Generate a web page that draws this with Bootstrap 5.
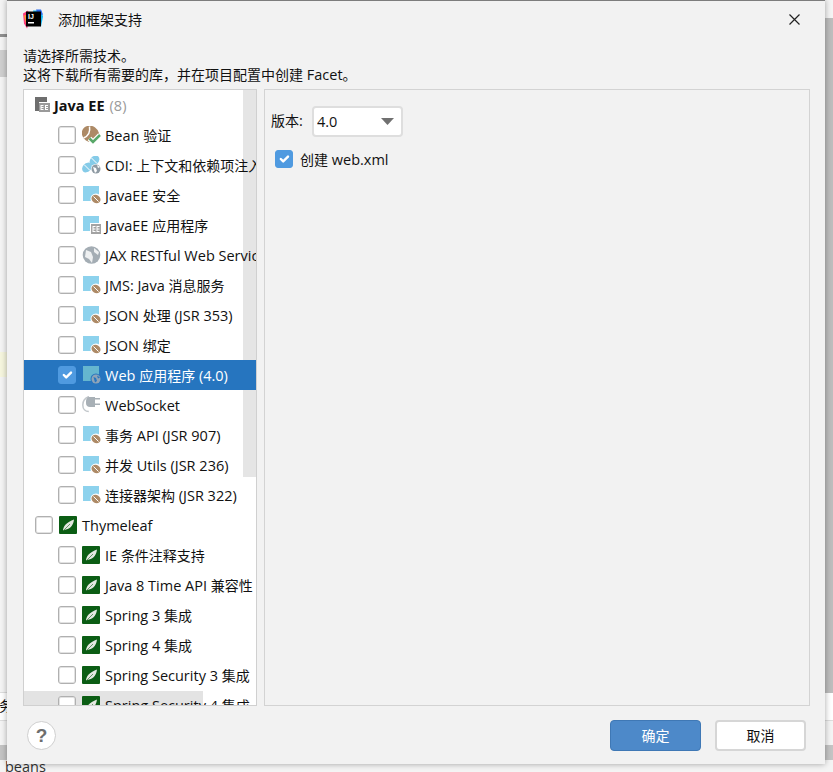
<!DOCTYPE html>
<html lang="zh-CN">
<head>
    <meta charset="UTF-8">
    <meta name="viewport" content="width=device-width, initial-scale=1.0">
    <title>添加框架支持</title>

    <!-- Bootstrap CSS -->
    <link href="https://cdn.jsdelivr.net/npm/bootstrap@5.3.0/dist/css/bootstrap.min.css" rel="stylesheet">

    <style>
        html, body { height: 100%; }
        body {
            position: relative;
            overflow: hidden;
            background: #f4f4f4;
            font-family: "Open Sans", "Noto Sans CJK SC", sans-serif;
            font-size: 14.5px;
            color: #111;
        }
        .cjk { font-size: 14px; }

        /* the IDE behind the dialog */
        .ide-piece { position: absolute; }
        .ide-rule { left: 0; width: 7px; top: 34px; height: 3px; background: #8f8f8f; }
        .ide-tab { left: 0; width: 7px; top: 50px; height: 27px; background: #cfcfcf; }
        .ide-hint { left: 0; width: 7px; top: 352px; height: 25px; background: #f6f6de; }
        .ide-foot { left: 0; right: 0; top: 692px; height: 29px; background: #fff; border-top: 1px solid #ddd; border-bottom: 1px solid #ddd; }
        .ide-shade { left: 0; right: 0; top: 745px; height: 15px; background: #c4c4c4; }
        .ide-side { right: 0; width: 8px; top: 18px; height: 675px; background: #bdbdbd; }
        .ide-glyph { left: -1px; top: 697px; line-height: 18px; font-size: 14px; }
        .ide-beans { left: 5px; top: 758px; line-height: 18px; color: #333; }

        /* dialog window */
        .dlg {
            position: absolute;
            left: 7px; top: 0;
            width: 818px; height: 764px;
            background: #f2f2f2;
            border-top: 1px solid #7d7d7d;
            box-shadow: 0 0 6px rgba(0, 0, 0, .35);
        }
        .dlg-title { height: 36px; padding: 0 16px; }
        .dlg-title-text { font-size: 14px; margin-left: 15px; }
        .dlg-close { margin-left: auto; margin-right: 9px; }
        .dlg-intro { padding-left: 16px; line-height: 19px; height: 52px; padding-top: 9px; }
        .dlg-body { padding-left: 16px; padding-right: 15px; height: 617px; gap: 7px; }

        .tree-box {
            position: relative;
            width: 234px;
            background: #fff;
            border: 1px solid #d0d0d0;
            overflow: hidden;
        }
        .tree-bar {
            position: absolute;
            right: 0; top: 0;
            width: 13px; height: 387px;
            background: rgba(0, 0, 0, .1);
        }
        .tree-hover {
            position: absolute;
            left: 0; bottom: 0;
            width: 179px; height: 14px;
            background: #e3e3e3;
        }
        .tree-list { position: relative; border-radius: 0; }
        .tree-row {
            display: flex;
            align-items: center;
            height: 30px;
            padding: 0;
            border: 0;
            background: transparent;
            color: #111;
            white-space: nowrap;
            font-size: 14.5px;
        }
        .list-group-item + .tree-row.active { margin-top: 0; border: 0; }
        .tree-row.active { background: #2675bf; color: #fff; }
        .lvl-0 { padding-left: 11px; }
        .lvl-1 { padding-left: 34px; }
        .tree-row svg { flex: none; width: 19px; height: 18px; margin-right: 4px; margin-left: 6px; }
        .tree-row.head svg { width: 16px; height: 16px; margin-left: 0; margin-right: 3px; }
        .row-text { padding-top: 2px; }
        .head-name { font-weight: 700; }
        .head-count { color: #9a9a9a; margin-left: 5px; }

        .ij-check.form-check-input {
            flex: none;
            width: 18px; height: 18px;
            margin: 0;
            border: 1px solid #b0b0b0;
            box-shadow: inset 0 0 0 1px #e2e2e2;
            border-radius: 3px;
            background-color: #fff;
        }
        .ij-check.form-check-input:checked {
            background-color: #4f9ae0;
            border-color: #4f9ae0;
            box-shadow: none;
        }

        .opt-box { flex: 1; border: 1px solid #d3d3d3; padding: 16px 6px; }
        .opt-label { width: 41px; padding-bottom: 2px; }
        .ij-select.form-select {
            width: 91px; height: 31px;
            padding: 0 0 0 3px;
            font-size: 14.5px;
            color: #111;
            border: 2px solid #dedede;
            border-radius: 4px;
            background-size: 13px 7px;
            background-position: right 7px center;
            background-image: url("data:image/svg+xml,%3csvg xmlns='http://www.w3.org/2000/svg' viewBox='0 0 13 7'%3e%3cpath fill='%23707070' d='M0 0h13L6.500 7z'/%3e%3c/svg%3e");
        }
        .web-xml { margin-top: 10px; padding-left: 4px; gap: 7px; }
        .web-xml label { padding-top: 2px; }

        .dlg-foot { height: 58px; padding-left: 20px; padding-right: 19px; padding-top: 14px; }
        .help-btn {
            width: 29px; height: 29px;
            margin-top: 1px;
            padding: 0;
            border-radius: 50%;
            background: #fff;
            border: 1px solid #cfcfcf;
            color: #6e6e6e;
            font-family: "Liberation Sans", sans-serif;
            font-weight: 700;
            font-size: 19px;
            line-height: 26px;
        }
        .ij-btn { height: 31px; width: 91px; padding: 0; font-size: 14px; border-radius: 4px; }
        .ij-ok.btn { background: #4d89c9; border: 1px solid #3f78b5; color: #fff; }
        .ij-cancel.btn { background: #fff; border: 2px solid #d6d6d6; color: #111; margin-left: 14px; }
    </style>
</head>
<body>

    <!-- icon set -->
    <svg width="0" height="0" class="position-absolute">
        <symbol id="i-jee" viewBox="0 0 16 16">
            <path fill="#6e6e6e" d="M0 0h12v5H4v9H0z"/>
            <rect x="4" y="6" width="11" height="9" fill="#9a9a9a"/>
            <path stroke="#fff" stroke-width="1" fill="none" d="M6 8.500h2.500M6 10.500h2.500M6 12.500h2.500M6 8v5M10.500 8.500H13M10.500 10.500H13M10.500 12.500H13M10.500 8v5"/>
        </symbol>
        <symbol id="i-bean" viewBox="0 0 19 18">
            <ellipse cx="8.500" cy="8" rx="9" ry="8" transform="rotate(35 8.500 8)" fill="#ad8a66"/>
            <path d="M1.500 12Q9 9 7.500 .5" stroke="#fff" stroke-width="1.500" fill="none"/>
            <path d="M7.500 12.500l3.500 3.500 7-7" stroke="#fff" stroke-width="5" fill="none"/>
            <path d="M7.500 12.500l3.500 3.500 7-7" stroke="#59a869" stroke-width="2.500" fill="none"/>
        </symbol>
        <symbol id="i-cdi" viewBox="0 0 19 18">
            <ellipse cx="12.500" cy="4.500" rx="5.500" ry="4.200" transform="rotate(-45 12.500 4.500)" fill="#85cbe8"/>
            <ellipse cx="5" cy="11.500" rx="5.500" ry="4.200" transform="rotate(-45 5 11.500)" fill="#85cbe8"/>
            <path d="M9.500 2l5.500 5.500M2 8.500L8 14.500" stroke="#fff" stroke-width="1"/>
            <circle cx="14" cy="13" r="5" fill="#fff"/>
            <circle cx="14" cy="13" r="4.500" fill="#8e9aa3"/>
            <path d="M11 11l3 1 1 3-2 2zM15 9l3 2-2 1z" fill="#fff"/>
        </symbol>
        <symbol id="i-sec" viewBox="0 0 19 18">
            <rect x="1" y="0" width="16" height="15" fill="#8dd2ed"/>
            <circle cx="14" cy="13" r="5.500" fill="#fff"/>
            <ellipse cx="14" cy="13" rx="4.700" ry="4" transform="rotate(35 14 13)" fill="#ad8a66"/>
            <path d="M11.500 10.500l5 5" stroke="#fff" stroke-width="1"/>
        </symbol>
        <symbol id="i-app" viewBox="0 0 19 18">
            <rect x="1" y="0" width="16" height="15" fill="#8dd2ed"/>
            <rect x="8" y="7" width="11" height="11" fill="#fff"/>
            <rect x="9" y="8" width="10" height="10" fill="#a3a3a3"/>
            <path stroke="#fff" stroke-width="1" fill="none" d="M11 10.500h2.500M11 13h2.500M11 15.500h2.500M15 10.500h2.500M15 13h2.500M15 15.500h2.500M11 10v6M15 10v6"/>
        </symbol>
        <symbol id="i-globe" viewBox="0 0 19 18">
            <circle cx="9.500" cy="9" r="8.800" fill="#a4adb4"/>
            <path d="M4 4l5 2 2 5-1 6-3-4-4-2zM12 2l5 4-1 3-4-3z" fill="#eef0f1"/>
        </symbol>
        <symbol id="i-web" viewBox="0 0 19 18">
            <rect x="1" y="0" width="16" height="15" fill="#65b6cf"/>
            <circle cx="14" cy="13" r="5.500" fill="#2675bf"/>
            <circle cx="14" cy="13" r="4.500" fill="#8ea4b8"/>
            <path d="M11.500 11l2.500 1 1 3-2 1.500zM15 9.500l3 2-2 1z" fill="#2675bf"/>
        </symbol>
        <symbol id="i-plug" viewBox="0 0 19 18">
            <path d="M7 .5C2.500 2 .8 5 .8 9s2.500 6.500 6 6.500" stroke="#c2c7cb" stroke-width="1.500" fill="none"/>
            <path d="M7 1h6v10H8C5.500 11 4 9.500 4 7V5C4 3 5.500 1 7 1z" fill="#a8b0b6"/>
            <path d="M13 2h5v1.500h-5zM13 7.500h5V9h-5z" fill="#a8b0b6"/>
        </symbol>
        <symbol id="i-leaf" viewBox="0 0 19 18">
            <rect width="18" height="18" rx="1" fill="#0b5d14"/>
            <path d="M4 15C4 10 8 6 15 3.500 14.500 8 12 13 7 13.500 6 13.600 5 14 4 15z" fill="#e3e8e0"/>
            <path d="M4 15L11 8" stroke="#0b5d14" stroke-width=".6"/>
        </symbol>
    </svg>

    <!-- IDE behind the dialog -->
    <div class="ide-piece ide-rule"></div>
    <div class="ide-piece ide-tab"></div>
    <div class="ide-piece ide-hint"></div>
    <div class="ide-piece ide-foot"></div>
    <div class="ide-piece ide-shade"></div>
    <div class="ide-piece ide-side"></div>
    <div class="ide-piece ide-glyph">务</div>
    <div class="ide-piece ide-beans">beans</div>

    <!-- Dialog -->
    <div class="dlg d-flex flex-column">
        <div class="dlg-title d-flex align-items-center">
            <svg width="20" height="21" viewBox="0 0 20 20">
                <path fill="#ff3d7f" d="M0 4l5-3 2 9-3 9-3-5z"/>
                <path fill="#ff9a2e" d="M1 6l4-1 2 7-4 2z"/>
                <path fill="#12b7f5" d="M10 1h8l2 6-2 10-5-3z"/>
                <path fill="#2a6cf0" d="M13 0h5l2 5-5 1z"/>
                <rect x="3" y="2" width="15" height="15" fill="#000"/>
                <rect x="5" y="12.500" width="6" height="1.500" fill="#fff"/>
                <text x="5" y="9.500" font-size="7" font-weight="700" fill="#fff" font-family="Liberation Sans, sans-serif">IJ</text>
            </svg>
            <span class="dlg-title-text">添加框架支持</span>
            <svg class="dlg-close" width="11" height="11" viewBox="0 0 11 11">
                <path d="M.5.500l10 10M10.500.500l-10 10" stroke="#222" stroke-width="1.200" fill="none"/>
            </svg>
        </div>

        <div class="dlg-intro">
            <div class="mix">请选择所需技术。</div>
            <div class="mix">这将下载所有需要的库，并在项目配置中创建 Facet。</div>
        </div>

        <div class="dlg-body d-flex">
            <div class="tree-box">
                <div class="tree-hover"></div>
                <div class="list-group tree-list" id="tree"></div>
                <div class="tree-bar"></div>
            </div>

            <div class="opt-box">
                <div class="d-flex align-items-center">
                    <label class="opt-label mix" for="ver">版本:</label>
                    <select class="form-select ij-select" id="ver">
                        <option>4.0</option>
                    </select>
                </div>
                <div class="web-xml d-flex align-items-center">
                    <input class="form-check-input ij-check" type="checkbox" id="webXml" checked>
                    <label for="webXml" class="mix">创建 web.xml</label>
                </div>
            </div>
        </div>

        <div class="dlg-foot d-flex align-items-start justify-content-between">
            <button type="button" class="btn help-btn">?</button>
            <div class="d-flex">
                <button type="button" class="btn ij-btn ij-ok">确定</button>
                <button type="button" class="btn ij-btn ij-cancel">取消</button>
            </div>
        </div>
    </div>

    <script>
        // tree rows: [label, icon, level, checked]
        const rows = [
            ['Bean 验证', 'bean', 1],
            ['CDI: 上下文和依赖项注入', 'cdi', 1],
            ['JavaEE 安全', 'sec', 1],
            ['JavaEE 应用程序', 'app', 1],
            ['JAX RESTful Web Services', 'globe', 1],
            ['JMS: Java 消息服务', 'sec', 1],
            ['JSON 处理 (JSR 353)', 'sec', 1],
            ['JSON 绑定', 'sec', 1],
            ['Web 应用程序 (4.0)', 'web', 1, true],
            ['WebSocket', 'plug', 1],
            ['事务 API (JSR 907)', 'sec', 1],
            ['并发 Utils (JSR 236)', 'sec', 1],
            ['连接器架构 (JSR 322)', 'sec', 1],
            ['Thymeleaf', 'leaf', 0],
            ['IE 条件注释支持', 'leaf', 1],
            ['Java 8 Time API 兼容性', 'leaf', 1],
            ['Spring 3 集成', 'leaf', 1],
            ['Spring 4 集成', 'leaf', 1],
            ['Spring Security 3 集成', 'leaf', 1],
            ['Spring Security 4 集成', 'leaf', 1]
        ];

        // chinese runs are a touch smaller than the latin ones in the reference
        const mix = s => s.replace(/[\u3000-\u9fff\uff00-\uffef]+/g, m => '<span class="cjk">' + m + '</span>');

        let html = '<div class="list-group-item tree-row head lvl-0">' +
            '<svg><use href="#i-jee"></use></svg>' +
            '<span class="head-name row-text">Java EE</span><span class="head-count row-text">(8)</span></div>';

        rows.forEach(r => {
            html += '<div class="list-group-item tree-row lvl-' + r[2] + (r[3] ? ' active' : '') + '">' +
                '<input class="form-check-input ij-check" type="checkbox"' + (r[3] ? ' checked' : '') + '>' +
                '<svg><use href="#i-' + r[1] + '"></use></svg>' +
                '<span class="row-text">' + mix(r[0]) + '</span></div>';
        });

        document.getElementById('tree').innerHTML = html;
        document.querySelectorAll('.mix').forEach(el => { el.innerHTML = mix(el.textContent); });
    </script>

    <!-- Bootstrap JS -->
    <script src="https://cdn.jsdelivr.net/npm/bootstrap@5.3.0/dist/js/bootstrap.bundle.min.js"></script>
</body>
</html>
